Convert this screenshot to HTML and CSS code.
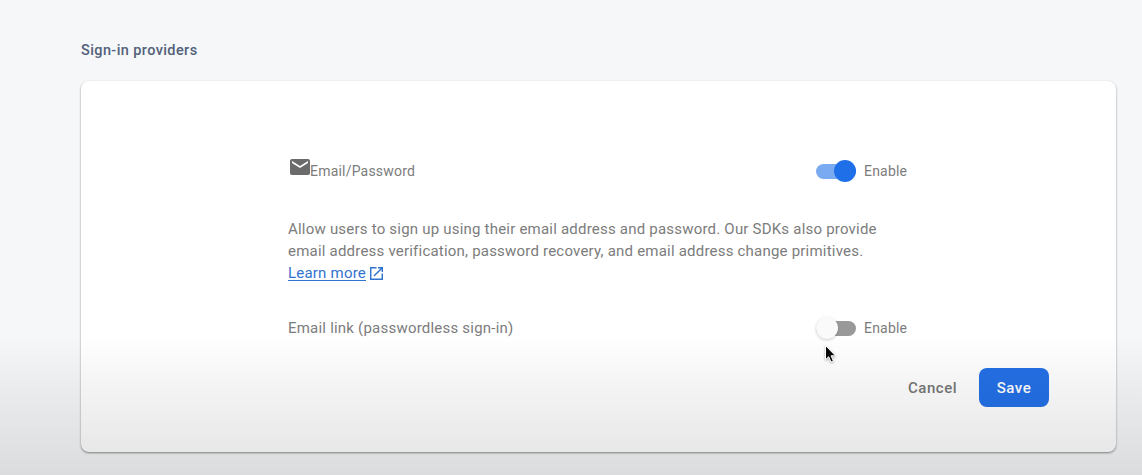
FILE: index.html
```html
<!DOCTYPE html>
<html lang="en">
<head>
<meta charset="utf-8">
<title>Sign-in providers</title>
<link rel="stylesheet" href="styles.css">
</head>
<body>
<main class="page">
  <h1 class="heading">Sign-in providers</h1>
  <section class="card">
    <div class="content">
      <div class="row">
        <div class="provider">
          <svg class="mail" viewBox="2 4 20 16" preserveAspectRatio="none"><path fill="#6b6b6b" d="M20 4H4c-1.100 0-2 .9-2 2v12c0 1.100.9 2 2 2h16c1.100 0 2-.9 2-2V6c0-1.100-.9-2-2-2zm0 4-8 5-8-5V6l8 5 8-5z"/></svg>
          <span class="provider-name">Email/Password</span>
        </div>
        <label class="toggle"><span class="switch on"><span class="thumb"></span></span><span class="enable">Enable</span></label>
      </div>
      <p class="description"><span class="line first">Allow users to sign up using their email address and password. Our SDKs also provide</span><span class="line second">email address verification, password recovery, and email address change primitives.</span><a class="link" href="#"><span class="learn">Learn more</span><svg class="external" viewBox="3 3 18 18"><path fill="#3273cf" d="M19 19H5V5h7V3H3v18h18v-9h-2zM14 3v2h3.590l-9.830 9.830 1.410 1.410L19 6.410V10h2V3z"/></svg></a></p>
      <div class="row second-row">
        <span class="email-link">Email link (passwordless sign-in)</span>
        <label class="toggle"><span class="switch"><span class="thumb"></span></span><span class="enable">Enable</span></label>
      </div>
    </div>
    <div class="actions">
      <button class="cancel">Cancel</button>
      <button class="save">Save</button>
    </div>
  </section>
  <div class="shade"></div>
  <svg class="cursor" viewBox="0 0 12 20"><path d="M1.500 1.500v14.200l3.200-3 2.300 5.300 2.400-1-2.300-5.200h4.400z" fill="#080808" stroke="#fff" stroke-width="1"/></svg>
</main>
</body>
</html>
```

FILE: styles.css
```css
* { box-sizing: border-box; }
body { margin: 0; font-family: Roboto, "Liberation Sans", sans-serif; color: #7c7c7c; }
.page { position: relative; height: 475px; padding: 41px 26px 0 81px; background: #f5f7f9; overflow: hidden; }
.heading { margin: 0 0 20px; font-size: 14.5px; line-height: 20px; font-weight: 500; color: #52617a; letter-spacing: .4px; }
.card { height: 371px; padding: 77px 67px 0 207px; border-radius: 8px; background: #fff; box-shadow: 0 1px 2px rgba(0,0,0,.35), 0 1px 3px rgba(0,0,0,.12); }
.content { width: 619px; }
.row { display: flex; justify-content: space-between; align-items: center; height: 26px; }
.provider { display: flex; align-items: center; }
.mail { width: 20px; height: 16px; margin: -9px 0 0 2px; }
.provider-name { font-size: 14px; letter-spacing: .2px; white-space: nowrap; }
.toggle { display: flex; align-items: center; gap: 8px; }
.switch { display: flex; align-items: center; width: 40px; height: 15px; border-radius: 8px; background: #999; }
.thumb { width: 22px; height: 22px; flex: none; border-radius: 50%; background: #fafafa; box-shadow: 0 1px 3px rgba(0,0,0,.2); }
.on { justify-content: flex-end; background: #7aaaf2; }
.on .thumb { background: #1f70e8; box-shadow: none; }
.enable { width: 43px; font-size: 14px; letter-spacing: .2px; white-space: nowrap; }
.description { margin: 34px 0 31px; font-size: 15px; line-height: 22px; letter-spacing: .21px; }
.line { display: block; white-space: nowrap; }
.link { display: flex; align-items: center; gap: 4px; color: #3273cf; text-decoration: none; }
.learn { text-decoration: underline; text-decoration-thickness: 1px; text-underline-offset: 2px; }
.external { width: 13px; height: 13px; }
.email-link { font-size: 15px; letter-spacing: .215px; }
.actions { display: flex; justify-content: flex-end; align-items: center; gap: 22px; height: 39px; margin-top: 27px; }
button { margin: 0; border: 0; font: 500 15px/41px Roboto, sans-serif; letter-spacing: .5px; }
.cancel { height: 39px; padding: 0; background: none; color: #777; }
.save { width: 70px; height: 39px; padding: 0; border-radius: 8px; background: #2370e7; color: #fff; }
.shade { position: absolute; inset: 335px 0 0; background: linear-gradient(rgba(0,0,0,0), rgba(0,0,0,.045) 35%, rgba(0,0,0,.11)); pointer-events: none; }
.cursor { position: absolute; left: 824px; top: 344px; width: 12px; height: 20px; filter: drop-shadow(0 1px 1px rgba(0,0,0,.3)); }
```
